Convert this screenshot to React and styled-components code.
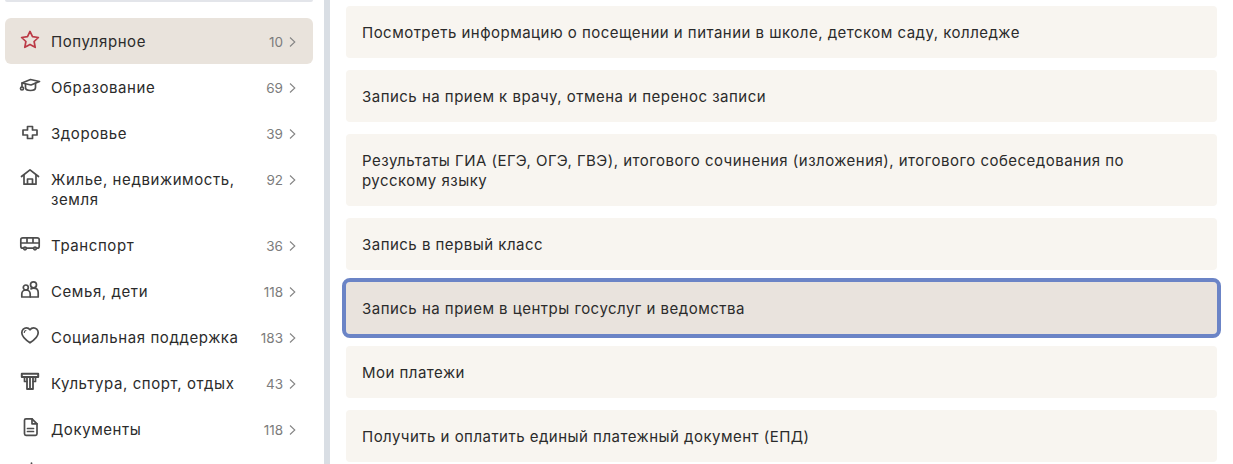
import React from 'react';
import styled, { createGlobalStyle } from 'styled-components';

const Global = createGlobalStyle`
  html, body { margin: 0; padding: 0; background: #fff; }
  body { font-family: "Inter", "Noto Sans", sans-serif; color: #2b2b2b; }
`;

const Page = styled.div`
  display: flex;
  width: 1233px;
  height: 464px;
  overflow: hidden;
  background: #fff;
`;

const Sidebar = styled.aside`
  box-sizing: border-box;
  width: 330px;
  flex: none;
  padding: 0 11px 0 5px;
  border-right: 6px solid #d9dee4;
`;

const SearchEdge = styled.div`
  height: 2px;
  margin-bottom: 16px;
  border-bottom: 2px solid #e3e5ea;
  box-sizing: border-box;
  border-radius: 0 0 4px 4px;
`;

const Menu = styled.nav`
  display: flex;
  flex-direction: column;
`;

const MenuRow = styled.div`
  display: flex;
  align-items: flex-start;
  padding: 14px 17px 12px 14px;
  border-radius: 6px;
  background: ${p => (p.$active ? '#e9e3dc' : 'transparent')};
  font-size: 15px;
  line-height: 20px;
  flex: none;
`;

const IconSlot = styled.span`
  display: flex;
  width: 22px;
  height: 22px;
  margin-right: 10px;
  flex: none;
  margin-top: -4px;
  color: ${p => (p.$active ? '#bb3a46' : '#4d4d4d')};
`;

const Label = styled.span`
  flex: 1;
  letter-spacing: 0.58px;
`;

const Count = styled.span`
  display: flex;
  align-items: center;
  gap: 6px;
  margin-left: 8px;
  font-size: 13.5px;
  color: #7c7c7c;
  height: 20px;
`;

const Cards = styled.main`
  display: flex;
  flex-direction: column;
  gap: 12px;
  padding: 6px 16px 0;
  flex: 1;
`;

const Card = styled.div`
  box-sizing: border-box;
  flex: none;
  padding: 17px 16px 15px;
  border-radius: 4px;
  background: ${p => (p.$focused ? '#e9e3dd' : '#f8f5f0')};
  font-size: 15px;
  line-height: 20px;
  letter-spacing: 0.48px;
  outline: ${p => (p.$focused ? '4px solid #6b84c6' : 'none')};
  width: 871px;
`;

const S = ({ children }) => (
  <svg width="22" height="22" viewBox="0 0 22 22" fill="none" stroke="currentColor" strokeWidth="1.7" strokeLinejoin="round" strokeLinecap="round">{children}</svg>
);

const icons = {
  star: <S><path d="M11 3.400l2.500 5.300 5.900.8-4.300 4 1.100 5.800L11 16.400l-5.200 2.900 1.100-5.800-4.300-4 5.900-.8z" /></S>,
  cap: <S><path d="M3 9L11.500 5.500 20.500 7.500 12 11z" /><path d="M6.500 10v3.500c0 2 2.500 3 5 3s5-1 5-3V9" /><path d="M3 9v4" /><circle cx="3" cy="14.500" r="1.500" /></S>,
  plus: <S><path d="M8.500 6.500h5V10H18v5h-4.500v3.500h-5V15H4v-5h4.500z" /></S>,
  home: <S><path d="M2.500 10.500L11 3.800l8.500 6.700" /><path d="M5 9v9.200h12V9" /><path d="M8.500 18.200V13h5v5.200" /></S>,
  bus: <S><rect x="1.800" y="5.800" width="18.400" height="10.400" rx="2" /><path d="M1.800 11h18.400M8 5.800V11M14 5.800V11" /><circle cx="6" cy="16.500" r="1.300" fill="#fff" /><circle cx="16" cy="16.500" r="1.300" fill="#fff" /></S>,
  family: <S><circle cx="6.800" cy="9.500" r="2.500" /><circle cx="14.500" cy="6.800" r="3" /><path d="M2.800 19v-3a4.200 4 0 0 1 8.400 0v3z" /><path d="M11.500 19h7.700v-4.500c0-2.600-2-4.300-4.700-4.300-1 0-1.900.3-2.600.7" /></S>,
  heart: <S><path d="M11 18.800C5.200 15 2.800 12.300 2.800 8.800c0-3 2.400-5 4.600-5 1.500 0 2.800.8 3.600 2 .8-1.200 2.100-2 3.600-2 2.200 0 4.600 2 4.600 5 0 3.500-2.400 6.200-8.200 10z" /><path d="M5.300 8.500c0-1 .6-1.900 1.600-2" strokeWidth="1.200" /></S>,
  pillar: <S><path d="M2.800 3.800h16.400v3.200H2.800z" strokeWidth="2" /><path d="M5.500 7v4.500h2.500M16.500 7v4.500H14" /><path d="M8 7v12h6V7M11 7v12" strokeWidth="1.800" /></S>,
  doc: <S><path d="M7 2.800h6l5 5v10a1.500 1.500 0 0 1-1.500 1.500H7A1.500 1.500 0 0 1 5.500 17.800V4.300A1.500 1.500 0 0 1 7 2.800z" /><path d="M13 2.800v5h5" /><path d="M8.500 12.500h6M8.500 15.500h6" /></S>,
  tip: <S><path d="M12.500 1v6" /></S>,
};

const Chevron = () => (
  <svg width="7" height="12" viewBox="0 0 7 12" fill="none" stroke="#858585" strokeWidth="1.100"><path d="M1 1.500L5.800 6 1 10.500" /></svg>
);

const categories = [
  ['star', 'Популярное', 10],
  ['cap', 'Образование', 69],
  ['plus', 'Здоровье', 39],
  ['home', 'Жилье, недвижимость, земля', 92],
  ['bus', 'Транспорт', 36],
  ['family', 'Семья, дети', 118],
  ['heart', 'Социальная поддержка', 183],
  ['pillar', 'Культура, спорт, отдых', 43],
  ['doc', 'Документы', 118],
  ['tip', '', null],
];

const services = [
  'Посмотреть информацию о посещении и питании в школе, детском саду, колледже',
  'Запись на прием к врачу, отмена и перенос записи',
  'Результаты ГИА (ЕГЭ, ОГЭ, ГВЭ), итогового сочинения (изложения), итогового собеседования по русскому языку',
  'Запись в первый класс',
  'Запись на прием в центры госуслуг и ведомства',
  'Мои платежи',
  'Получить и оплатить единый платежный документ (ЕПД)',
];

export default function App() {
  return (
    <Page>
      <Global />
      <Sidebar>
        <SearchEdge />
        <Menu>
          {categories.map(([icon, label, count], i) => (
            <MenuRow key={icon} $active={i === 0}>
              <IconSlot $active={i === 0}>{icons[icon]}</IconSlot>
              <Label>{label}</Label>
              {count !== null && <Count>{count}<Chevron /></Count>}
            </MenuRow>
          ))}
        </Menu>
      </Sidebar>
      <Cards>
        {services.map((s, i) => (
          <Card key={s} $focused={i === 4}>{s}</Card>
        ))}
      </Cards>
    </Page>
  );
}
